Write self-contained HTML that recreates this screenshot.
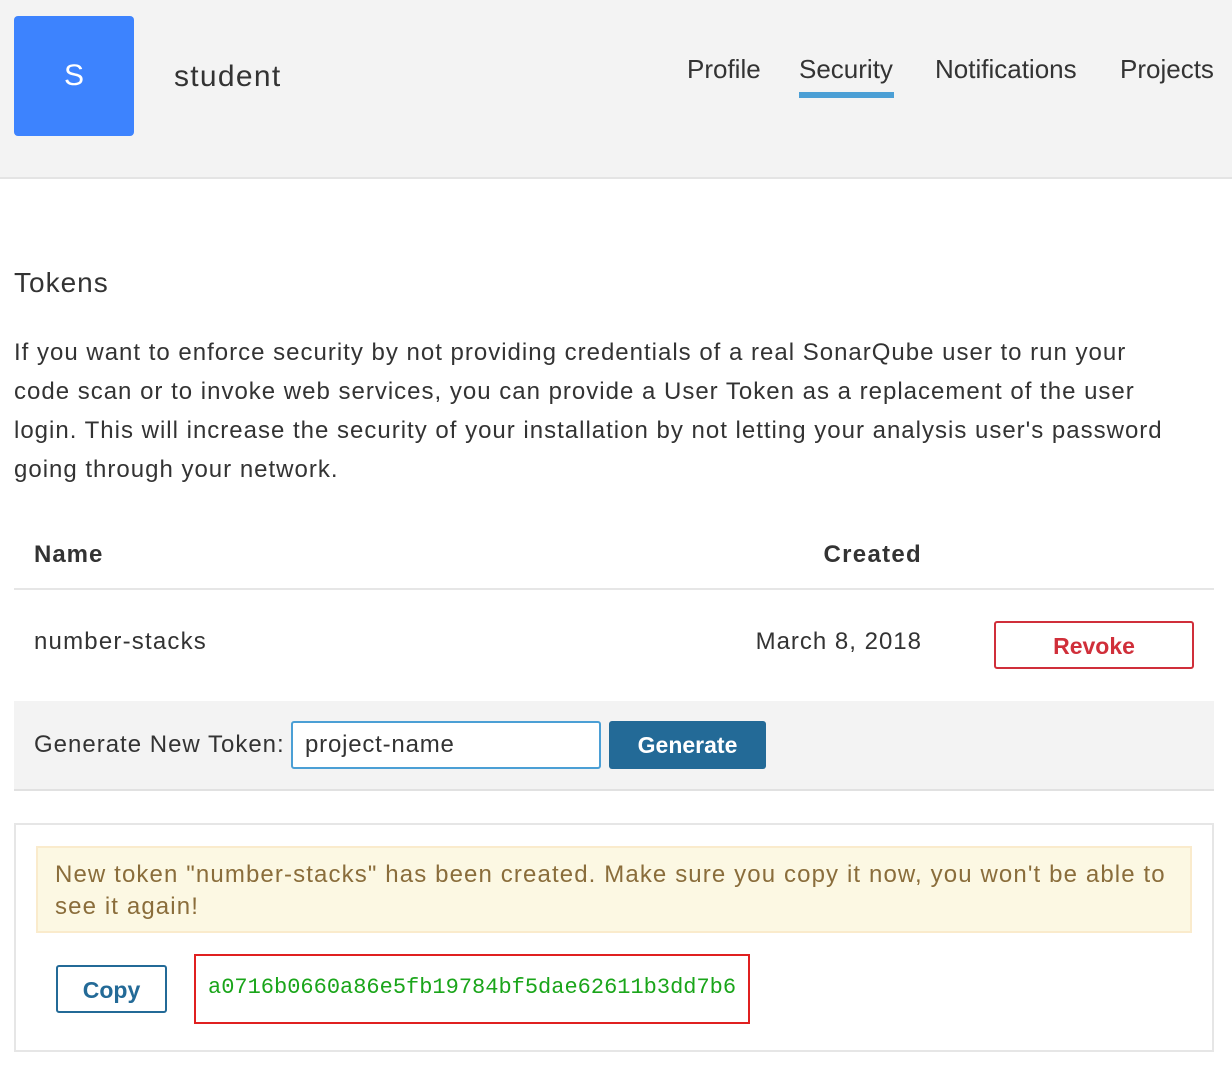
<!DOCTYPE html>
<html><head><style>
*{margin:0;padding:0;box-sizing:border-box}
body{width:1232px;height:1080px;background:#fff;font-family:"Liberation Sans",Helvetica,sans-serif;color:#333;position:relative;overflow:hidden}
.a{position:absolute;white-space:nowrap}
.s{letter-spacing:1px}
</style></head><body>
<div class="a" style="left:0;top:0;width:1232px;height:179px;background:#f3f3f3;border-bottom:2px solid #e4e4e4"></div>
<div class="a" style="left:14px;top:16px;width:120px;height:120px;background:#3d83fe;border-radius:4px;color:#fff;font-size:30px;text-align:center;line-height:120px">S</div>
<div class="a s" style="left:174px;top:58px;font-size:30px;line-height:38px;letter-spacing:1.3px">student</div>
<div class="a" style="left:687px;top:53px;font-size:26px;line-height:32px">Profile</div>
<div class="a" style="left:799px;top:53px;font-size:26px;line-height:32px">Security</div>
<div class="a" style="left:799px;top:92px;width:95px;height:6px;background:#4b9fd5"></div>
<div class="a" style="left:935px;top:53px;font-size:26px;line-height:32px">Notifications</div>
<div class="a" style="left:1120px;top:53px;font-size:26px;line-height:32px">Projects</div>

<div class="a s" style="left:14px;top:266px;font-size:28px;line-height:34px">Tokens</div>
<div class="a s" style="left:14px;top:333px;font-size:24px;line-height:39px;white-space:nowrap">If you want to enforce security by not providing credentials of a real SonarQube user to run your<br>code scan or to invoke web services, you can provide a User Token as a replacement of the user<br>login. This will increase the security of your installation by not letting your analysis user's password<br>going through your network.</div>

<div class="a s" style="left:34px;top:540px;font-size:24px;font-weight:bold;line-height:30px">Name</div>
<div class="a" style="left:782px;top:540px;font-size:24px;font-weight:bold;line-height:30px;width:140px;text-align:right;letter-spacing:1.3px">Created</div>
<div class="a" style="left:14px;top:588px;width:1200px;height:2px;background:#e6e6e6"></div>
<div class="a" style="left:34px;top:627px;font-size:24px;line-height:30px;letter-spacing:1.2px">number-stacks</div>
<div class="a s" style="left:692px;top:627px;font-size:24px;line-height:30px;width:230px;text-align:right">March 8, 2018</div>
<div class="a" style="left:994px;top:621px;width:200px;height:48px;border:2px solid #d02f3a;border-radius:3px;color:#d02f3a;font-weight:bold;font-size:23px;text-align:center;line-height:46px">Revoke</div>

<div class="a" style="left:14px;top:701px;width:1200px;height:90px;background:#f3f3f3;border-bottom:2px solid #e1e1e1"></div>
<div class="a s" style="left:34px;top:730px;font-size:24px;line-height:30px">Generate New Token:</div>
<div class="a" style="left:291px;top:721px;width:310px;height:48px;border:2px solid #4b9fd5;border-radius:3px;background:#fff;font-size:24px;line-height:44px;padding-left:12px;letter-spacing:0.8px">project-name</div>
<div class="a" style="left:609px;top:721px;width:157px;height:48px;background:#236a97;border-radius:3px;color:#fff;font-weight:bold;font-size:23px;text-align:center;line-height:48px">Generate</div>

<div class="a" style="left:14px;top:823px;width:1200px;height:229px;border:2px solid #e6e6e6"></div>
<div class="a" style="left:36px;top:846px;width:1156px;height:87px;background:#fcf8e3;border:2px solid #faebcc;color:#8a6d3b;font-size:24px;line-height:32px;padding:11px 0 0 17px;letter-spacing:1.12px">New token "number-stacks" has been created. Make sure you copy it now, you won't be able to<br>see it again!</div>
<div class="a" style="left:56px;top:965px;width:111px;height:48px;border:2px solid #236a97;border-radius:3px;color:#236a97;font-weight:bold;font-size:23px;text-align:center;line-height:46px">Copy</div>
<div class="a" style="left:194px;top:954px;width:556px;height:70px;border:2px solid #e02020"></div>
<div class="a" style="left:208px;top:973px;font-family:'Liberation Mono',monospace;font-size:22px;line-height:30px;color:#1aa51a">a0716b0660a86e5fb19784bf5dae62611b3dd7b6</div>
</body></html>
